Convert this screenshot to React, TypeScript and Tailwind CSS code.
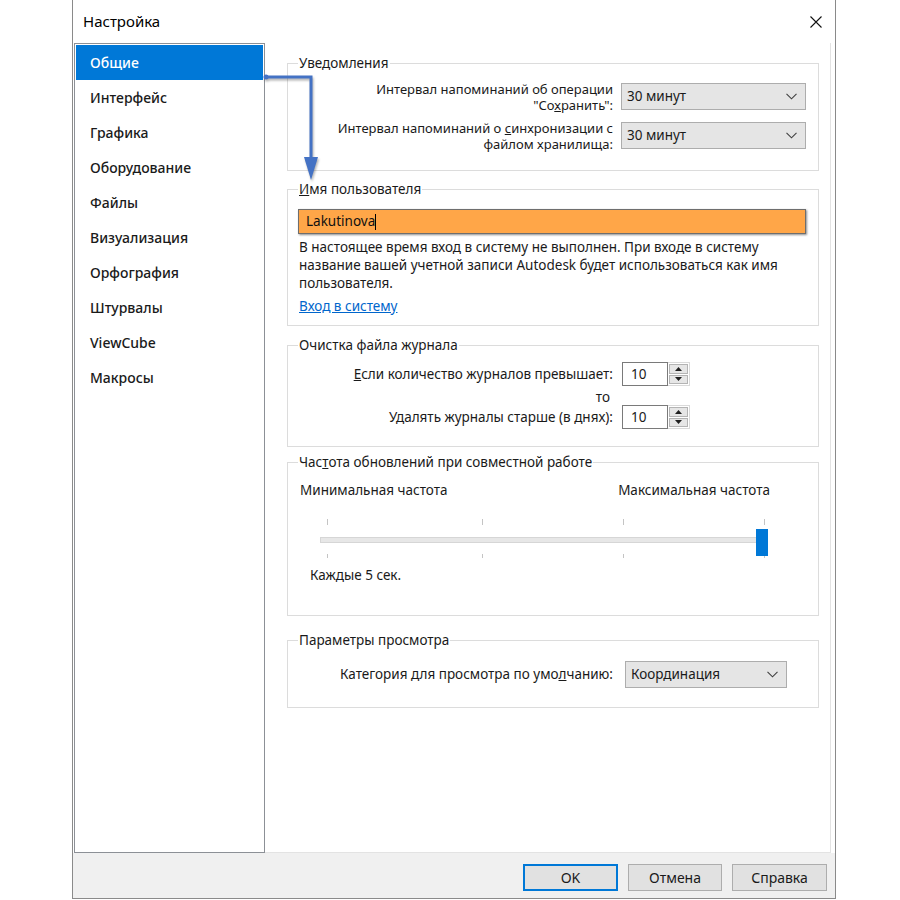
import React from 'react';

const sidebarItems = [
    'Общие',
    'Интерфейс',
    'Графика',
    'Оборудование',
    'Файлы',
    'Визуализация',
    'Орфография',
    'Штурвалы',
    'ViewCube',
    'Макросы',
];

function Chevron() {
    return (
        <svg width="11" height="7" viewBox="0 0 11 7" className="shrink-0">
            <path d="M0.5 0.8 L5.5 5.8 L10.5 0.8" fill="none" stroke="#404040" strokeWidth="1.1" />
        </svg>
    );
}

function Select({ value, className }: { value: string; className: string }) {
    return (
        <div className={`flex items-center justify-between bg-[#e5e5e5] border border-[#adadad] pl-[5px] pr-[8px] text-[13.5px] ${className}`}>
            <span>{value}</span>
            <Chevron />
        </div>
    );
}

function Spin({ value }: { value: string }) {
    return (
        <div className="flex h-[24px] ml-[9px]">
            <div className="w-[46px] h-full border border-[#7a7a7a] bg-white pl-[8px] flex items-center">{value}</div>
            <div className="w-[22px] h-full flex flex-col gap-px p-px border-y border-r border-[#dadada] bg-white">
                <div className="flex-1 flex items-center justify-center bg-[#e6e6e6] border border-[#b4b4b4]">
                    <svg width="7" height="4" viewBox="0 0 7 4"><path d="M3.5 0 L7 4 L0 4 Z" fill="#202020" /></svg>
                </div>
                <div className="flex-1 flex items-center justify-center bg-[#e6e6e6] border border-[#b4b4b4]">
                    <svg width="7" height="4" viewBox="0 0 7 4"><path d="M0 0 L7 0 L3.5 4 Z" fill="#202020" /></svg>
                </div>
            </div>
        </div>
    );
}

function Group({ title, className, children }: { title: React.ReactNode; className: string; children: React.ReactNode }) {
    return (
        <fieldset className={`border border-[#dcdcdc] pl-[10px] pr-[12px] w-[532px] ml-[22px] ${className}`}>
            <legend className="px-[1px] leading-[16px]">{title}</legend>
            {children}
        </fieldset>
    );
}

export default function App() {
    return (
        <div className="relative w-[900px] h-[900px] bg-white text-[13.5px] text-[#1a1a1a] font-['Noto_Sans',sans-serif] overflow-hidden">
            <div className="ml-[72px] w-[764px] h-[899px] border-x border-b border-[#8a8a8a] bg-white flex flex-col">
                {/* Title bar */}
                <div className="h-[43px] shrink-0 flex items-center justify-between pl-[10px] pr-[13px]">
                    <span className="text-[15px] text-black">Настройка</span>
                    <svg width="12" height="12" viewBox="0 0 12 12">
                        <path d="M0.5 0.5 L11.5 11.5 M11.5 0.5 L0.5 11.5" stroke="#111" strokeWidth="1.1" />
                    </svg>
                </div>

                {/* Body */}
                <div className="flex flex-1 min-h-0 pl-px">
                    <div className="w-[191px] shrink-0 border border-[#8c9096] p-px">
                        {sidebarItems.map((item, i) => (
                            <div
                                key={item}
                                className={`h-[35px] flex items-center pl-[14px] text-[14px] font-medium ${i === 0 ? 'bg-[#0078d7] text-white' : 'text-[#1a1a1a]'}`}
                            >
                                {item}
                            </div>
                        ))}
                    </div>

                    <div className="w-[566px] shrink-0 border-r border-b border-[#e3e3e3] pt-[12px]">
                        <Group title="Уведомления" className="pt-[12px] pb-[21px]">
                            <div className="flex items-center h-[27px]">
                                <div className="w-[315px] text-right leading-[16px] text-[13px]">
                                    Интервал напоминаний об операции
                                    <br />
                                    "Со<span className="underline">х</span>ранить":
                                </div>
                                <Select value="30 минут" className="ml-[8px] w-[185px] h-[27px]" />
                            </div>
                            <div className="flex items-center h-[27px] mt-[12px]">
                                <div className="w-[315px] text-right leading-[16px] text-[13px]">
                                    Интервал напоминаний о <span className="underline">с</span>инхронизации с
                                    <br />
                                    файлом хранилища:
                                </div>
                                <Select value="30 минут" className="ml-[8px] w-[185px] h-[27px]" />
                            </div>
                        </Group>

                        <Group title={<><span className="underline">И</span>мя пользователя</>} className="mt-[10px] pt-[12px] pb-[10px]">
                            <div className="w-[508px] h-[25px] bg-[#ffa648] border border-[#6e6e6e] shadow-[1px_1px_2px_rgba(0,0,0,0.45)] flex items-center pl-[7px]">
                                <span className="text-[#111]">Lakutinova</span>
                                <span className="w-px h-[16px] bg-black" />
                            </div>
                            <p className="mt-[4px] leading-[18px] pl-px">
                                В настоящее время вход в систему не выполнен. При входе в систему
                                <br />
                                название вашей учетной записи Autodesk будет использоваться как имя
                                <br />
                                пользователя.
                            </p>
                            <div className="mt-[5px] leading-[18px] pl-px">
                                <span className="text-[#0066cc] underline">Вход в систему</span>
                            </div>
                        </Group>

                        <Group title="Очистка файла журнала" className="mt-[11px] pt-[9px] pb-[17px]">
                            <div className="flex items-center h-[24px]">
                                <div className="w-[315px] text-right">
                                    <span className="underline">Е</span>сли количество журналов превышает:
                                </div>
                                <Spin value="10" />
                            </div>
                            <div className="w-[315px] h-[19px] pt-[3px] leading-[16px] text-right pr-[3px]">то</div>
                            <div className="flex items-center h-[24px]">
                                <div className="w-[315px] text-right">
                                    У<span className="underline">д</span>алять журналы старше (в днях):
                                </div>
                                <Spin value="10" />
                            </div>
                        </Group>

                        <Group title={<>Час<span className="underline">т</span>ота обновлений при совместной работе</>} className="mt-[7px] pt-[12px] pb-[32px]">
                            <div className="ml-[2px] w-[470px] flex justify-between leading-[16px]">
                                <span>Минимальная частота</span>
                                <span>Максимальная частота</span>
                            </div>
                            <div className="relative ml-[22px] w-[448px] mt-[21px]">
                                <div className="flex h-[6px] mt-[2px]">
                                    <span className="ml-[7px] w-px bg-[#c4c4c4]" />
                                    <span className="ml-[154px] w-px bg-[#c4c4c4]" />
                                    <span className="ml-[140px] w-px bg-[#c4c4c4]" />
                                    <span className="ml-[140px] w-px bg-[#c4c4c4]" />
                                </div>
                                <div className="mt-[12px] h-[6px] border border-[#d6d6d6] bg-[#e7e7e7]" />
                                <div className="flex h-[4px] mt-[11px]">
                                    <span className="ml-[7px] w-px bg-[#c4c4c4]" />
                                    <span className="ml-[154px] w-px bg-[#c4c4c4]" />
                                    <span className="ml-[140px] w-px bg-[#c4c4c4]" />
                                    <span className="ml-[140px] w-px bg-[#c4c4c4]" />
                                </div>
                                <div className="absolute top-[10px] left-[436px] w-[12px] h-[27px] bg-[#0078d7]" />
                            </div>
                            <div className="ml-[12px] mt-[9px] leading-[16px]">Каждые 5 сек.</div>
                        </Group>

                        <Group title="Параметры просмотра" className="mt-[16px] pt-[13px] pb-[19px]">
                            <div className="flex items-center h-[27px]">
                                <div className="w-[315px] text-right">
                                    Категория для просмотра по умо<span className="underline">л</span>чанию:
                                </div>
                                <Select value="Координация" className="ml-[12px] w-[162px] h-[27px]" />
                            </div>
                        </Group>
                    </div>
                </div>

                {/* Buttons */}
                <div className="h-[45px] shrink-0 bg-[#f0f0f0] flex justify-end items-start pt-[11px] pr-[8px] gap-[10px]">
                    <button className="w-[95px] h-[27px] bg-[#e1e1e1] border-2 border-[#0078d7] text-[14px]">OK</button>
                    <button className="w-[94px] h-[27px] bg-[#e1e1e1] border border-[#adadad] text-[14px]">Отмена</button>
                    <button className="w-[95px] h-[27px] bg-[#e1e1e1] border border-[#adadad] text-[14px]">Справка</button>
                </div>
            </div>

            {/* Annotation arrow */}
            <svg className="absolute left-0 top-0 pointer-events-none" width="900" height="900">
                <g fill="#4472c4" stroke="#4472c4" style={{ filter: 'drop-shadow(1px 2px 1px rgba(0,0,0,0.3))' }}>
                    <circle cx="266" cy="77" r="2.5" stroke="none" />
                    <path d="M266 77 L311 77 L311 160" fill="none" strokeWidth="3" />
                    <path d="M304 157 L318 157 L311 180 Z" stroke="none" />
                </g>
            </svg>
        </div>
    );
}
